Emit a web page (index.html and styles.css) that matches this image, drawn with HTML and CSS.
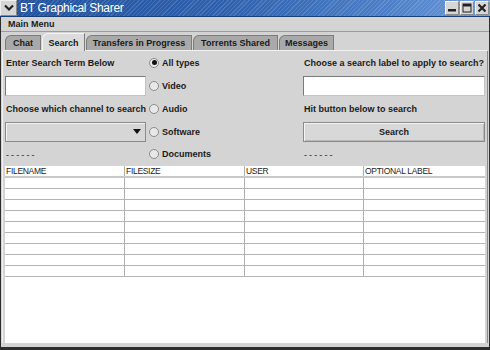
FILE: index.html
```html
<!DOCTYPE html>
<html>
<head>
<meta charset="utf-8">
<link rel="stylesheet" href="styles.css">
</head>
<body>
<div class="window">
  <div class="titlebar">
    <div class="wm-menu">
      <svg width="10" height="8" viewBox="0 0 10 8"><path d="M1 1.5 L5 5.5 L9 1.5" fill="none" stroke="#222" stroke-width="2.2"/></svg>
    </div>
    <div class="title">BT Graphical Sharer</div>
    <div class="wm-buttons">
      <div class="wm-btn"><svg width="10" height="10" viewBox="0 0 10 10"><rect x="1" y="6" width="8" height="2.5" fill="#222"/></svg></div>
      <div class="wm-btn"><svg width="10" height="10" viewBox="0 0 10 10"><rect x="1" y="1" width="8" height="8" fill="none" stroke="#222" stroke-width="1"/><rect x="1" y="1" width="8" height="2.5" fill="#222"/></svg></div>
      <div class="wm-btn"><svg width="10" height="10" viewBox="0 0 10 10"><path d="M1.5 1.5 L8.5 8.5 M8.5 1.5 L1.5 8.5" stroke="#222" stroke-width="2.2"/></svg></div>
    </div>
  </div>
  <div class="frame">
    <div class="menubar"><span class="menu-item">Main Menu</span></div>
    <div class="tabs">
      <div class="tab t-chat">Chat</div>
      <div class="tab selected t-search">Search</div>
      <div class="tab t-transfers">Transfers in Progress</div>
      <div class="tab t-torrents">Torrents Shared</div>
      <div class="tab t-messages">Messages</div>
    </div>
    <div class="panel">
      <div class="form">
        <div class="cell label">Enter Search Term Below</div>
        <div class="cell radio-cell"><span class="radio checked"></span>All types</div>
        <div class="cell label">Choose a search label to apply to search?</div>

        <div class="cell"><div class="textfield"></div></div>
        <div class="cell radio-cell"><span class="radio"></span>Video</div>
        <div class="cell"><div class="textfield"></div></div>

        <div class="cell label">Choose which channel to search</div>
        <div class="cell radio-cell"><span class="radio"></span>Audio</div>
        <div class="cell label">Hit button below to search</div>

        <div class="cell"><div class="combo"><span class="combo-arrow"></span></div></div>
        <div class="cell radio-cell"><span class="radio"></span>Software</div>
        <div class="cell"><div class="button">Search</div></div>

        <div class="cell label dashes">------</div>
        <div class="cell radio-cell"><span class="radio"></span>Documents</div>
        <div class="cell label dashes">------</div>
      </div>
      <div class="table">
        <div class="trow head">
          <div class="td">FILENAME</div>
          <div class="td">FILESIZE</div>
          <div class="td">USER</div>
          <div class="td">OPTIONAL LABEL</div>
        </div>
        <div class="trow"><div class="td"></div><div class="td"></div><div class="td"></div><div class="td"></div></div>
        <div class="trow"><div class="td"></div><div class="td"></div><div class="td"></div><div class="td"></div></div>
        <div class="trow"><div class="td"></div><div class="td"></div><div class="td"></div><div class="td"></div></div>
        <div class="trow"><div class="td"></div><div class="td"></div><div class="td"></div><div class="td"></div></div>
        <div class="trow"><div class="td"></div><div class="td"></div><div class="td"></div><div class="td"></div></div>
        <div class="trow"><div class="td"></div><div class="td"></div><div class="td"></div><div class="td"></div></div>
        <div class="trow"><div class="td"></div><div class="td"></div><div class="td"></div><div class="td"></div></div>
        <div class="trow"><div class="td"></div><div class="td"></div><div class="td"></div><div class="td"></div></div>
        <div class="trow"><div class="td"></div><div class="td"></div><div class="td"></div><div class="td"></div></div>
      </div>
    </div>
  </div>
</div>
</body>
</html>
```

FILE: styles.css
```css
* { box-sizing: border-box; }
html, body { margin: 0; padding: 0; }
body {
  width: 490px;
  height: 350px;
  overflow: hidden;
  font-family: "Liberation Sans", Arial, sans-serif;
  background: #d4d4d4;
}
.window {
  width: 490px;
  height: 350px;
  display: flex;
  flex-direction: column;
  background: #d4d4d4;
}
.titlebar {
  height: 17px;
  display: flex;
  align-items: stretch;
  background:
    repeating-linear-gradient(135deg, rgba(255,255,255,0) 0px, rgba(255,255,255,0) 2px, rgba(255,255,255,0.13) 2px, rgba(255,255,255,0.13) 3px),
    linear-gradient(to right, #22529e 0%, #2e60ad 45%, #4d80c8 80%, #6f9bd8 100%);
  border-bottom: 1px solid #1a3e78;
}
.wm-menu {
  width: 17px;
  background: #d6d6d6;
  border: 1px solid #8a8a8a;
  border-top-color: #f0f0f0;
  border-left-color: #f0f0f0;
  display: flex;
  align-items: center;
  justify-content: center;
}
.title {
  flex: 1;
  color: #ffffff;
  font-size: 12px;
  line-height: 16px;
  padding-left: 3px;
  letter-spacing: -0.3px;
}
.wm-buttons {
  display: flex;
  align-items: center;
  gap: 1px;
  padding-right: 1px;
}
.wm-btn {
  width: 14px;
  height: 14px;
  background: #d6d6d6;
  border: 1px solid #8a8a8a;
  border-top-color: #f4f4f4;
  border-left-color: #f4f4f4;
  display: flex;
  align-items: center;
  justify-content: center;
}
.frame {
  flex: 1;
  display: flex;
  flex-direction: column;
  border-left: 1px solid #2e2e2e;
  border-right: 1px solid #2e2e2e;
  border-bottom: 3px solid #2e2e2e;
  padding: 0 2px 4px 2px;
}
.menubar {
  height: 15px;
  border-bottom: 1px solid #9c9c9c;
  margin: 0 -2px;
  padding-left: 7px;
  display: flex;
  align-items: center;
}
.menu-item {
  font-size: 9px;
  font-weight: bold;
  color: #1a1a1a;
}
.tabs {
  display: flex;
  margin-top: 2px;
  height: 17px;
  padding-left: 2px;
  align-items: flex-end;
  border-bottom: 1px solid #f2f2f2;
}
.tab {
  height: 15px;
  font-size: 9px;
  font-weight: bold;
  color: #1a1a1a;
  background: #a9a9a9;
  border: 1px solid #7c7c7c;
  border-bottom: none;
  border-top-left-radius: 6px;
  display: flex;
  align-items: center;
  justify-content: center;
  margin-right: 1px;
}
.tab.selected {
  background: #dcdcdc;
  border-color: #f4f4f4 #7c7c7c #7c7c7c #f4f4f4;
  margin-bottom: -1px;
  height: 18px;
}
.t-chat { width: 36px; }
.t-search { width: 43px; }
.t-transfers { width: 106px; }
.t-torrents { width: 85px; }
.t-messages { width: 55px; }
.panel {
  flex: 1;
  display: flex;
  flex-direction: column;
  padding: 0 2px;
  border-left: 1px solid #f2f2f2;
  border-right: 1px solid #8a8a8a;
  margin: 0 -1px;
}
.form {
  display: grid;
  grid-template-columns: 141px 157px 182px;
  grid-template-rows: 23px 23px 23px 23px 22px;
}
.cell {
  display: flex;
  align-items: center;
  font-size: 9px;
  font-weight: bold;
  color: #1a1a1a;
  white-space: nowrap;
}
.label { padding-left: 1px; }
.dashes { letter-spacing: 2.1px; font-weight: normal; color: #222; padding-top: 2px; }
.radio-cell { padding-left: 3px; }
.radio {
  width: 10px;
  height: 10px;
  border-radius: 50%;
  border: 1px solid #8c8c8c;
  background: #e8e8e8;
  margin-right: 3px;
  display: inline-flex;
  align-items: center;
  justify-content: center;
}
.radio.checked::after {
  content: "";
  width: 5px;
  height: 5px;
  border-radius: 50%;
  background: #111;
}
.textfield {
  width: 100%;
  height: 20px;
  background: #ffffff;
  border: 1px solid #7a7a7a;
  border-right-color: #c4c4c4;
  border-bottom-color: #c4c4c4;
}
.combo {
  width: 100%;
  height: 20px;
  background: #d6d6d6;
  border: 1px solid #8a8a8a;
  box-shadow: inset 1px 1px 0 #f2f2f2;
  display: flex;
  align-items: center;
  justify-content: flex-end;
  padding-right: 4px;
}
.combo-arrow {
  width: 0;
  height: 0;
  border-left: 4px solid transparent;
  border-right: 4px solid transparent;
  border-top: 5px solid #111;
}
.button {
  width: 100%;
  height: 20px;
  background: #d8d8d8;
  border: 1px solid #8a8a8a;
  box-shadow: inset 1px 1px 0 #f4f4f4, inset -1px -1px 0 #b8b8b8;
  display: flex;
  align-items: center;
  justify-content: center;
  font-size: 9px;
  font-weight: bold;
  color: #1a1a1a;
}
.table {
  flex: 1;
  background: #ffffff;
  margin-top: 1px;
}
.trow {
  display: grid;
  grid-template-columns: 120px 120px 119px 121px;
  height: 11px;
  border-bottom: 1px solid #b4b4b4;
}
.trow.head {
  height: 12px;
  border-bottom: 2px solid #c8c8c8;
}
.td {
  border-right: 1px solid #b0b0b0;
  font-size: 8.5px;
  color: #222;
  line-height: 10px;
  padding-left: 1px;
  letter-spacing: -0.3px;
  white-space: nowrap;
  overflow: hidden;
}
.td:last-child { border-right: none; }
```
